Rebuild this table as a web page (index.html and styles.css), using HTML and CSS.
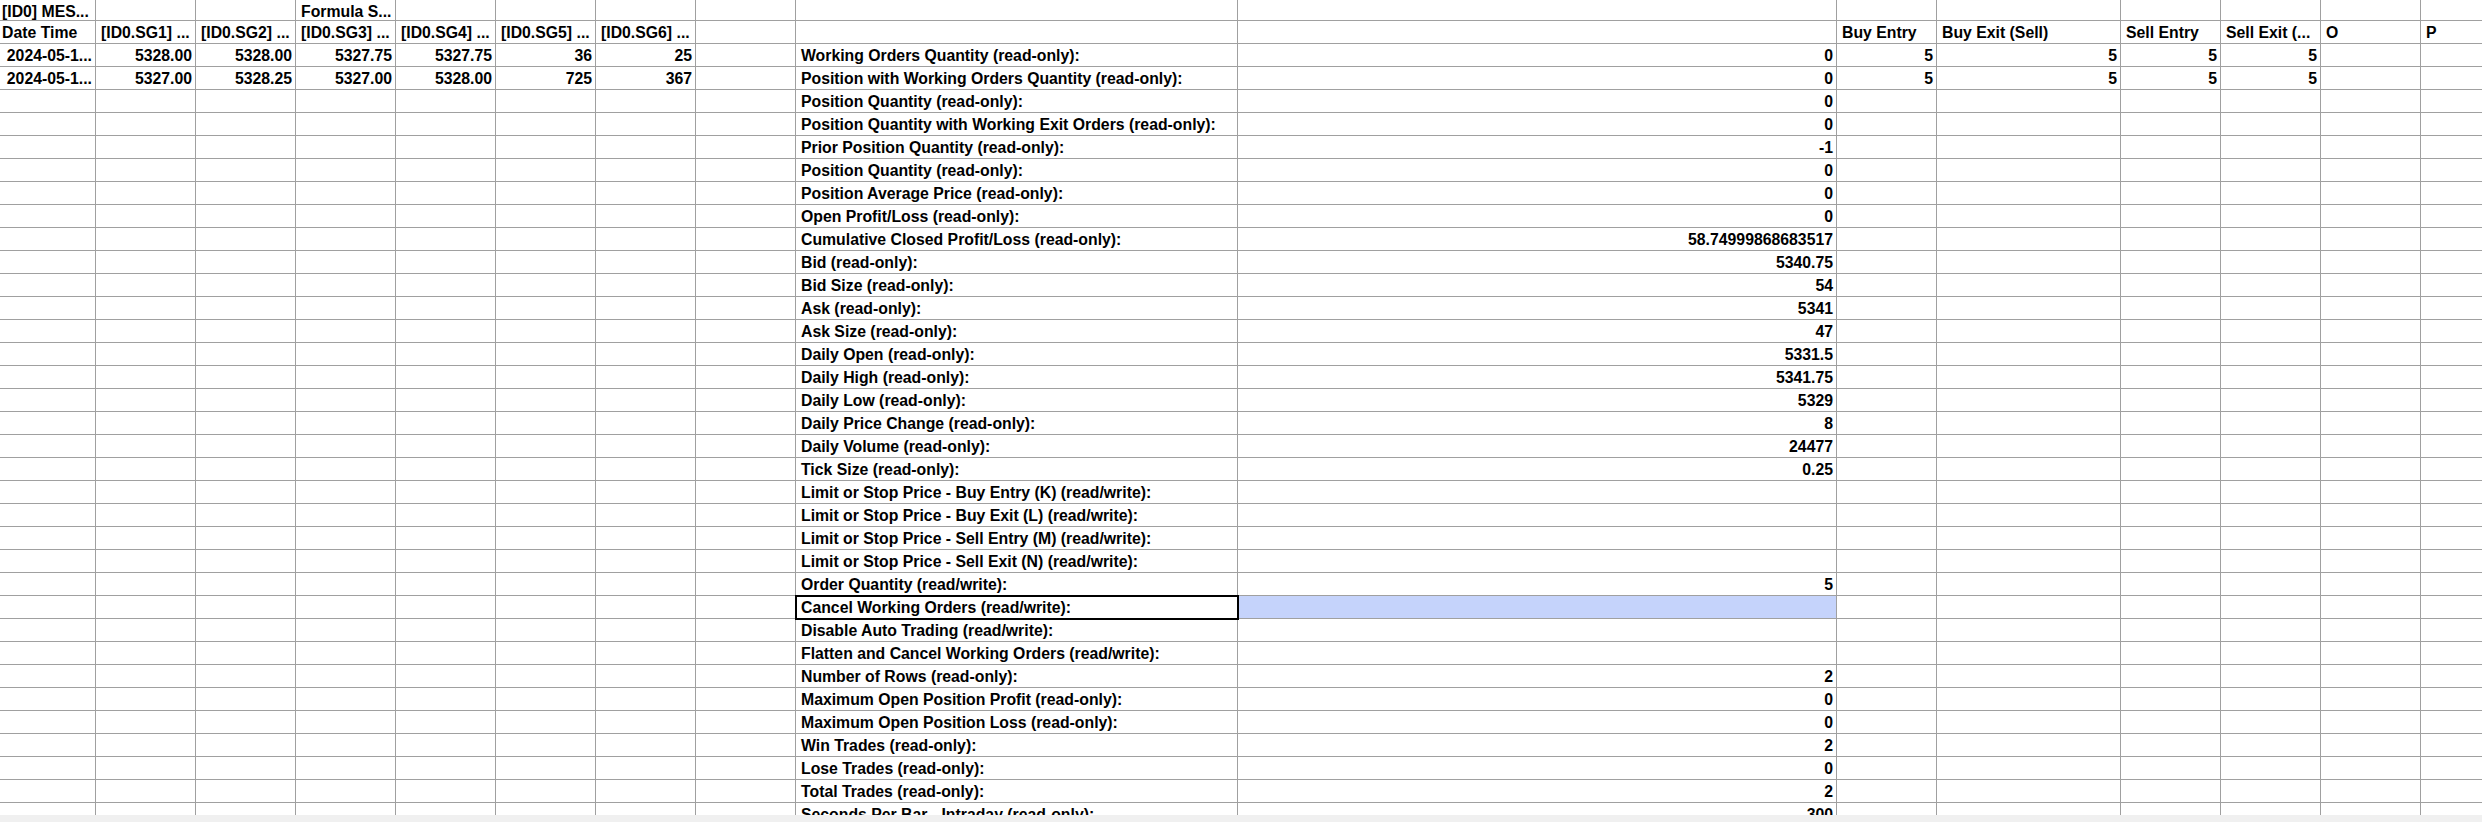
FILE: index.html
```html
<!DOCTYPE html>
<html lang="en">
<head>
    <meta charset="UTF-8">
    <title>Spreadsheet - Trading</title>
    <link rel="stylesheet" href="styles.css">
</head>
<body>
    <div class="window">
        <div class="sheet">
            <!-- header rows -->
            <div class="row first"><div>[ID0] MES...</div><div></div><div></div><div>Formula S...</div><div></div><div></div><div></div><div></div><div></div><div></div><div></div><div></div><div></div><div></div><div></div><div></div></div>
            <div class="row"><div>Date Time</div><div>[ID0.SG1] ...</div><div>[ID0.SG2] ...</div><div>[ID0.SG3] ...</div><div>[ID0.SG4] ...</div><div>[ID0.SG5] ...</div><div>[ID0.SG6] ...</div><div></div><div></div><div></div><div>Buy Entry</div><div>Buy Exit (Sell)</div><div>Sell Entry</div><div>Sell Exit (...</div><div>O</div><div>P</div></div>

            <!-- data rows -->
            <div class="row"><div class="r">2024-05-1...</div><div class="r">5328.00</div><div class="r">5328.00</div><div class="r">5327.75</div><div class="r">5327.75</div><div class="r">36</div><div class="r">25</div><div></div><div>Working Orders Quantity (read-only):</div><div class="r">0</div><div class="r">5</div><div class="r">5</div><div class="r">5</div><div class="r">5</div><div></div><div></div></div>
            <div class="row"><div class="r">2024-05-1...</div><div class="r">5327.00</div><div class="r">5328.25</div><div class="r">5327.00</div><div class="r">5328.00</div><div class="r">725</div><div class="r">367</div><div></div><div>Position with Working Orders Quantity (read-only):</div><div class="r">0</div><div class="r">5</div><div class="r">5</div><div class="r">5</div><div class="r">5</div><div></div><div></div></div>

            <!-- trading parameters -->
            <div class="row"><div></div><div></div><div></div><div></div><div></div><div></div><div></div><div></div><div>Position Quantity (read-only):</div><div class="r">0</div><div></div><div></div><div></div><div></div><div></div><div></div></div>
            <div class="row"><div></div><div></div><div></div><div></div><div></div><div></div><div></div><div></div><div>Position Quantity with Working Exit Orders (read-only):</div><div class="r">0</div><div></div><div></div><div></div><div></div><div></div><div></div></div>
            <div class="row"><div></div><div></div><div></div><div></div><div></div><div></div><div></div><div></div><div>Prior Position Quantity (read-only):</div><div class="r">-1</div><div></div><div></div><div></div><div></div><div></div><div></div></div>
            <div class="row"><div></div><div></div><div></div><div></div><div></div><div></div><div></div><div></div><div>Position Quantity (read-only):</div><div class="r">0</div><div></div><div></div><div></div><div></div><div></div><div></div></div>
            <div class="row"><div></div><div></div><div></div><div></div><div></div><div></div><div></div><div></div><div>Position Average Price (read-only):</div><div class="r">0</div><div></div><div></div><div></div><div></div><div></div><div></div></div>
            <div class="row"><div></div><div></div><div></div><div></div><div></div><div></div><div></div><div></div><div>Open Profit/Loss (read-only):</div><div class="r">0</div><div></div><div></div><div></div><div></div><div></div><div></div></div>
            <div class="row"><div></div><div></div><div></div><div></div><div></div><div></div><div></div><div></div><div>Cumulative Closed Profit/Loss (read-only):</div><div class="r">58.74999868683517</div><div></div><div></div><div></div><div></div><div></div><div></div></div>
            <div class="row"><div></div><div></div><div></div><div></div><div></div><div></div><div></div><div></div><div>Bid (read-only):</div><div class="r">5340.75</div><div></div><div></div><div></div><div></div><div></div><div></div></div>
            <div class="row"><div></div><div></div><div></div><div></div><div></div><div></div><div></div><div></div><div>Bid Size (read-only):</div><div class="r">54</div><div></div><div></div><div></div><div></div><div></div><div></div></div>
            <div class="row"><div></div><div></div><div></div><div></div><div></div><div></div><div></div><div></div><div>Ask (read-only):</div><div class="r">5341</div><div></div><div></div><div></div><div></div><div></div><div></div></div>
            <div class="row"><div></div><div></div><div></div><div></div><div></div><div></div><div></div><div></div><div>Ask Size (read-only):</div><div class="r">47</div><div></div><div></div><div></div><div></div><div></div><div></div></div>
            <div class="row"><div></div><div></div><div></div><div></div><div></div><div></div><div></div><div></div><div>Daily Open (read-only):</div><div class="r">5331.5</div><div></div><div></div><div></div><div></div><div></div><div></div></div>
            <div class="row"><div></div><div></div><div></div><div></div><div></div><div></div><div></div><div></div><div>Daily High (read-only):</div><div class="r">5341.75</div><div></div><div></div><div></div><div></div><div></div><div></div></div>
            <div class="row"><div></div><div></div><div></div><div></div><div></div><div></div><div></div><div></div><div>Daily Low (read-only):</div><div class="r">5329</div><div></div><div></div><div></div><div></div><div></div><div></div></div>
            <div class="row"><div></div><div></div><div></div><div></div><div></div><div></div><div></div><div></div><div>Daily Price Change (read-only):</div><div class="r">8</div><div></div><div></div><div></div><div></div><div></div><div></div></div>
            <div class="row"><div></div><div></div><div></div><div></div><div></div><div></div><div></div><div></div><div>Daily Volume (read-only):</div><div class="r">24477</div><div></div><div></div><div></div><div></div><div></div><div></div></div>
            <div class="row"><div></div><div></div><div></div><div></div><div></div><div></div><div></div><div></div><div>Tick Size (read-only):</div><div class="r">0.25</div><div></div><div></div><div></div><div></div><div></div><div></div></div>
            <div class="row"><div></div><div></div><div></div><div></div><div></div><div></div><div></div><div></div><div>Limit or Stop Price - Buy Entry (K) (read/write):</div><div class="r"></div><div></div><div></div><div></div><div></div><div></div><div></div></div>
            <div class="row"><div></div><div></div><div></div><div></div><div></div><div></div><div></div><div></div><div>Limit or Stop Price - Buy Exit (L) (read/write):</div><div class="r"></div><div></div><div></div><div></div><div></div><div></div><div></div></div>
            <div class="row"><div></div><div></div><div></div><div></div><div></div><div></div><div></div><div></div><div>Limit or Stop Price - Sell Entry (M) (read/write):</div><div class="r"></div><div></div><div></div><div></div><div></div><div></div><div></div></div>
            <div class="row"><div></div><div></div><div></div><div></div><div></div><div></div><div></div><div></div><div>Limit or Stop Price - Sell Exit (N) (read/write):</div><div class="r"></div><div></div><div></div><div></div><div></div><div></div><div></div></div>
            <div class="row"><div></div><div></div><div></div><div></div><div></div><div></div><div></div><div></div><div>Order Quantity (read/write):</div><div class="r">5</div><div></div><div></div><div></div><div></div><div></div><div></div></div>
            <div class="row"><div></div><div></div><div></div><div></div><div></div><div></div><div></div><div></div><div class="selected">Cancel Working Orders (read/write):</div><div class="r highlight"></div><div></div><div></div><div></div><div></div><div></div><div></div></div>
            <div class="row"><div></div><div></div><div></div><div></div><div></div><div></div><div></div><div></div><div>Disable Auto Trading (read/write):</div><div class="r"></div><div></div><div></div><div></div><div></div><div></div><div></div></div>
            <div class="row"><div></div><div></div><div></div><div></div><div></div><div></div><div></div><div></div><div>Flatten and Cancel Working Orders (read/write):</div><div class="r"></div><div></div><div></div><div></div><div></div><div></div><div></div></div>
            <div class="row"><div></div><div></div><div></div><div></div><div></div><div></div><div></div><div></div><div>Number of Rows (read-only):</div><div class="r">2</div><div></div><div></div><div></div><div></div><div></div><div></div></div>
            <div class="row"><div></div><div></div><div></div><div></div><div></div><div></div><div></div><div></div><div>Maximum Open Position Profit (read-only):</div><div class="r">0</div><div></div><div></div><div></div><div></div><div></div><div></div></div>
            <div class="row"><div></div><div></div><div></div><div></div><div></div><div></div><div></div><div></div><div>Maximum Open Position Loss (read-only):</div><div class="r">0</div><div></div><div></div><div></div><div></div><div></div><div></div></div>
            <div class="row"><div></div><div></div><div></div><div></div><div></div><div></div><div></div><div></div><div>Win Trades (read-only):</div><div class="r">2</div><div></div><div></div><div></div><div></div><div></div><div></div></div>
            <div class="row"><div></div><div></div><div></div><div></div><div></div><div></div><div></div><div></div><div>Lose Trades (read-only):</div><div class="r">0</div><div></div><div></div><div></div><div></div><div></div><div></div></div>
            <div class="row"><div></div><div></div><div></div><div></div><div></div><div></div><div></div><div></div><div>Total Trades (read-only):</div><div class="r">2</div><div></div><div></div><div></div><div></div><div></div><div></div></div>
            <div class="row"><div></div><div></div><div></div><div></div><div></div><div></div><div></div><div></div><div>Seconds Per Bar - Intraday (read-only):</div><div class="r">300</div><div></div><div></div><div></div><div></div><div></div><div></div></div>
        </div>
        <div class="scrollbar"></div>
    </div>
</body>
</html>
```

FILE: styles.css
```css
:root {
    --cols: 96px repeat(7, 100px) 442px 599px 100px 184px repeat(4, 100px);
    --grid-line: #a0a0a0;
    --highlight: #c5d3fb;
}

* {
    margin: 0;
    padding: 0;
    box-sizing: border-box;
}

body {
    width: 2482px;
    height: 822px;
    overflow: hidden;
    background: #fff;
    color: #000;
    font-family: 'Liberation Sans', Arial, sans-serif;
    font-weight: bold;
    font-size: 15.8px;
}

.window {
    display: flex;
    flex-direction: column;
    height: 822px;
}

/* Sheet grid */
.sheet {
    height: 815px;
    overflow: hidden;
}

.row {
    display: grid;
    grid-template-columns: var(--cols);
    height: 23px;
}

.row.first {
    height: 21px;
}

.row > div {
    border-right: 1px solid var(--grid-line);
    border-bottom: 1px solid var(--grid-line);
    padding: 0 3px 0 5px;
    line-height: 24px;
    white-space: nowrap;
    overflow: hidden;
}

.row > div:first-child {
    padding-left: 2px;
}

.row > .r {
    text-align: right;
}

.row > .selected {
    outline: 2px solid #000;
    outline-offset: -1px;
    position: relative;
    z-index: 1;
}

.row > .highlight {
    background: var(--highlight);
}

/* Horizontal scrollbar strip */
.scrollbar {
    flex: 1;
    background: #f0f0f0;
}
```
